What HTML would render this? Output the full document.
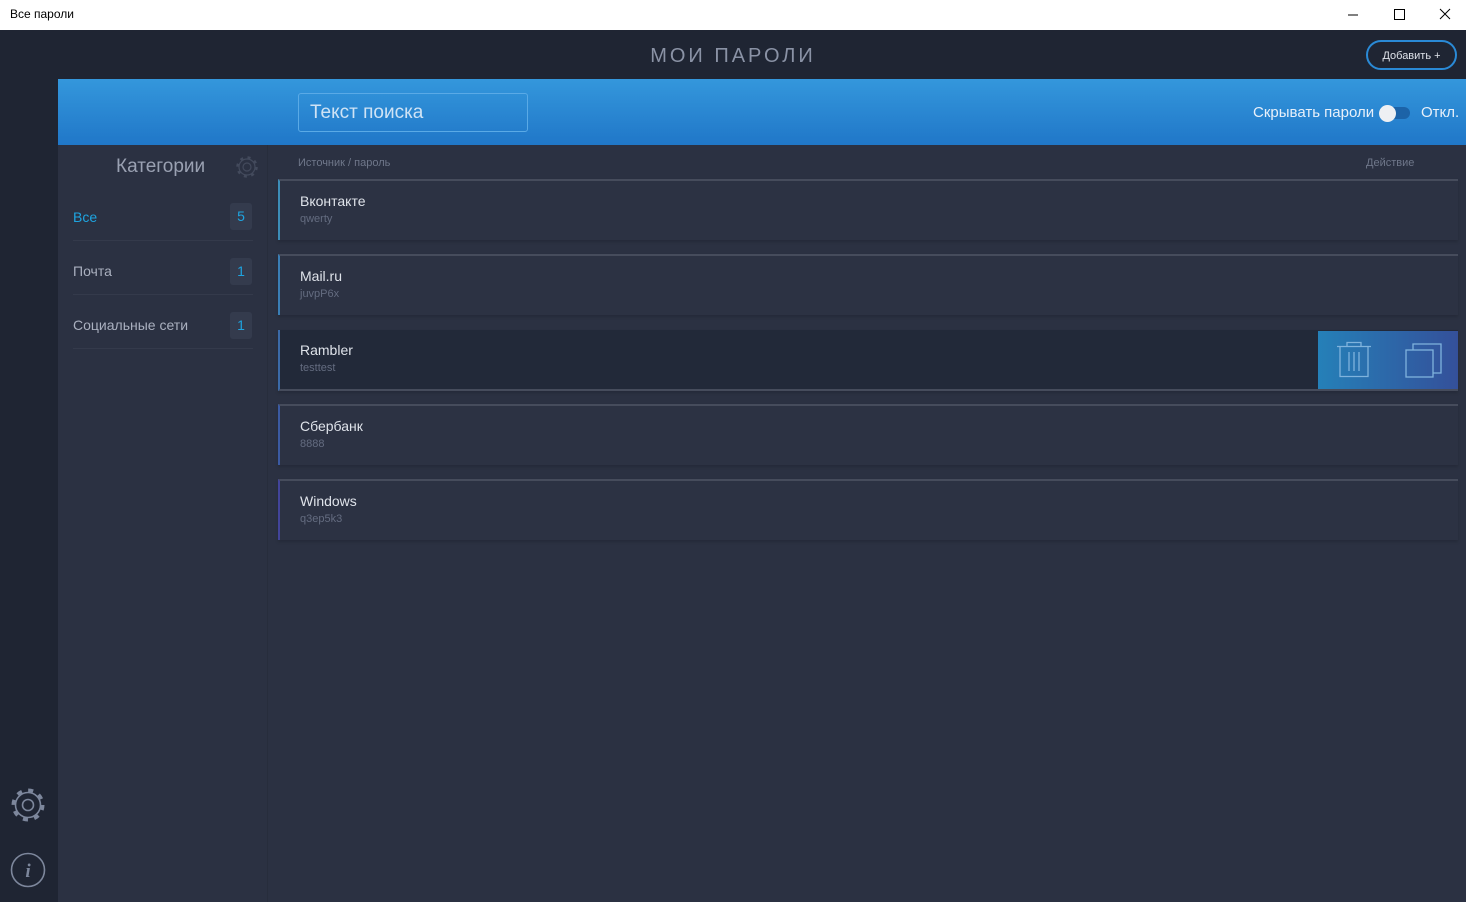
<!DOCTYPE html>
<html><head><meta charset="utf-8"><style>
*{margin:0;padding:0;box-sizing:border-box}
body{width:1466px;height:902px;overflow:hidden;background:#2b3142;font-family:"Segoe UI","Liberation Sans","Noto Sans CJK SC",sans-serif;position:relative}
.a{position:absolute}
.tb{left:0;top:0;width:1466px;height:30px;background:#fff;color:#000;font-size:12px}
.side{left:0;top:30px;width:58px;height:872px;background:#1f2533}
.top{left:58px;top:30px;width:1408px;height:49px;background:#1f2533}
.hdr{left:58px;top:79px;width:1408px;height:66px;background:linear-gradient(#3497dc,#2077c8)}
.cat{left:58px;top:145px;width:210px;height:757px;background:#2b3142;border-right:1px solid #272d3c}
.row{left:278px;width:1180px;height:61px;background:#2c3243;border-top:2px solid #464c5c;box-shadow:0 2px 3px rgba(0,0,0,.15)}
.row .n{position:absolute;left:20px;top:12px;font-size:14px;color:#dfe3ea}
.row .p{position:absolute;left:20px;top:32px;font-size:11px;color:#646c80}
.ci{position:absolute;left:15px;font-size:14px;color:#aab0bf}
.badge{position:absolute;left:172px;width:22px;height:27px;background:#343b4d;border-radius:3px;color:#1ea4e0;font-size:14px;text-align:center;line-height:27px}
.sep{position:absolute;left:15px;width:180px;height:1px;background:#343a4b}
</style></head><body>
<div class="a tb"><span class="a" style="left:10px;top:7px">Все пароли</span>
<svg class="a" style="left:1340px;top:0" width="126" height="30" stroke="#000" fill="none" stroke-width="1"><path d="M8 15h10"/><rect x="54.5" y="9.5" width="10" height="10"/><path d="M100 9l10 10M110 9l-10 10"/></svg></div>
<div class="a side"></div>
<svg class="a" style="left:10px;top:787px" width="36" height="36" viewBox="0 0 36 36" fill="none" stroke="#7d879c" stroke-width="1.6"><circle cx="18" cy="18" r="12.5"/><circle cx="18" cy="18" r="14.5" stroke-width="4" stroke-dasharray="5 6.4"/><circle cx="18" cy="18" r="5.5"/></svg>
<svg class="a" style="left:10px;top:852px" width="36" height="36" fill="none" stroke="#7d879c" stroke-width="1.6"><circle cx="18" cy="18" r="16.5"/><text x="18" y="25" text-anchor="middle" font-family="Liberation Serif" font-style="italic" font-weight="bold" font-size="19" fill="#7d879c" stroke="none">i</text></svg>
<div class="a top"><div class="a" style="left:0;width:1350px;top:15px;text-align:center;color:#8a92a5;font-size:20px;letter-spacing:3px">МОИ ПАРОЛИ</div>
<div class="a" style="left:1308px;top:10px;width:91px;height:30px;border:2px solid #2a8ad6;border-radius:15px;color:#dfe3ea;font-size:11px;text-align:center;line-height:28px">Добавить +</div></div>
<div class="a hdr">
<div class="a" style="left:240px;top:14px;width:230px;height:39px;border:1px solid #5aaae6;border-radius:3px;color:#cfe3f5;font-size:19px;padding:8px 11px">Текст поиска</div>
<div class="a" style="left:1195px;top:25px;color:#e8f0fa;font-size:15px">Скрывать пароли</div>
<div class="a" style="left:1322px;top:28px;width:30px;height:12px;background:#1c63a8;border-radius:6px"></div>
<div class="a" style="left:1321px;top:26px;width:17px;height:17px;background:#eef0f3;border-radius:50%"></div>
<div class="a" style="left:1363px;top:25px;color:#e8f0fa;font-size:15px">Откл.</div>
</div>
<div class="a cat">
<div class="a" style="left:58px;top:11px;color:#9aa1b2;font-size:19px">Категории</div>
<svg class="a" style="left:178px;top:11px" width="22" height="22" fill="none" stroke="#434a5c" stroke-width="1.2"><circle cx="11" cy="11" r="8"/><circle cx="11" cy="11" r="9.5" stroke-width="2.5" stroke-dasharray="3 4.5"/><circle cx="11" cy="11" r="4"/></svg>
<div class="ci" style="top:64px;color:#1ea4e0">Все</div><div class="badge" style="top:58px">5</div><div class="sep" style="top:95px"></div>
<div class="ci" style="top:118px">Почта</div><div class="badge" style="top:113px">1</div><div class="sep" style="top:149px"></div>
<div class="ci" style="top:172px">Социальные сети</div><div class="badge" style="top:167px">1</div><div class="sep" style="top:203px"></div>
</div>
<div class="a" style="left:298px;top:157px;color:#6f778a;font-size:11px">Источник / пароль</div>
<div class="a" style="left:1366px;top:157px;color:#6f778a;font-size:11px">Действие</div>
<div class="a row" style="top:179px;border-left:2px solid #3c8db8"><div class="n">Вконтакте</div><div class="p">qwerty</div></div>
<div class="a row" style="top:254px;border-left:2px solid #3a7eb5"><div class="n">Mail.ru</div><div class="p">juvpP6x</div></div>
<div class="a row" style="top:330px;background:#222939;border-top:none;border-bottom:2px solid #464c5c;border-left:2px solid #3b6aa8"><div class="n" style="top:12px">Rambler</div><div class="p" style="top:32px">testtest</div>
<div class="a" style="left:1038px;top:1px;width:140px;height:58px;background:linear-gradient(90deg,#2580b8,#34509a)">
<svg class="a" style="left:18px;top:10px" width="36" height="38" fill="none" stroke="#7fb3dd" stroke-width="1.3"><path d="M1 5.5h34M11 5.5V1.5h14v4M4 5.5v30h28v-30M13 11v19M18 11v19M23 11v19"/></svg>
<svg class="a" style="left:87px;top:12px" width="38" height="36" fill="none" stroke="#7fb3dd" stroke-width="1.3"><rect x="1" y="7" width="27" height="27"/><path d="M8 7V1h28v29h-8"/></svg>
</div></div>
<div class="a row" style="top:404px;border-left:2px solid #3b5aa2"><div class="n">Сбербанк</div><div class="p">8888</div></div>
<div class="a row" style="top:479px;border-left:2px solid #42449a"><div class="n">Windows</div><div class="p">q3ep5k3</div></div>
</body></html>
